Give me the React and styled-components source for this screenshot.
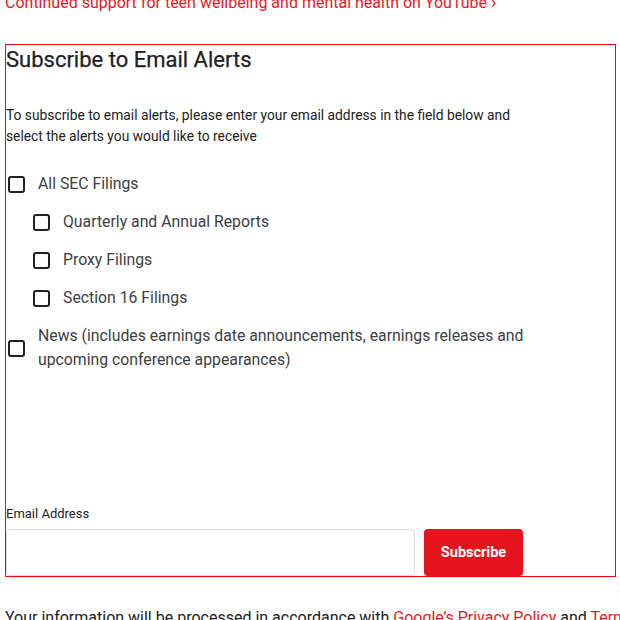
import React from 'react';
import styled, { createGlobalStyle } from 'styled-components';

const GlobalStyle = createGlobalStyle`
  html, body {
    margin: 0;
    padding: 0;
    background: #fff;
    overflow: hidden;
  }
  body {
    font-family: Roboto, "Open Sans", Arial, sans-serif;
    color: #202124;
  }
`;

const alerts = [
  { id: 'all', label: 'All SEC Filings', nested: false },
  { id: 'quarterly', label: 'Quarterly and Annual Reports', nested: true },
  { id: 'proxy', label: 'Proxy Filings', nested: true },
  { id: 'section16', label: 'Section 16 Filings', nested: true },
  {
    id: 'news',
    label:
      'News (includes earnings date announcements, earnings releases and upcoming conference appearances)',
    nested: false,
  },
];

const App = () => (
  <Page>
    <GlobalStyle />
    <TopLink href="#">
      Continued support for teen wellbeing and mental health on YouTube <Chevron>›</Chevron>
    </TopLink>

    <AlertsForm onSubmit={e => e.preventDefault()}>
      <Title>Subscribe to Email Alerts</Title>
      <Intro>
        To subscribe to email alerts, please enter your email address in the field below and
        <br />
        select the alerts you would like to receive
      </Intro>

      <OptionList>
        {alerts.map(item => (
          <Option key={item.id} $nested={item.nested}>
            <Box type="checkbox" id={item.id} />
            <OptionLabel htmlFor={item.id}>{item.label}</OptionLabel>
          </Option>
        ))}
      </OptionList>

      <EmailField>
        <FieldLabel htmlFor="email">Email Address</FieldLabel>
        <FieldRow>
          <EmailInput id="email" type="email" />
          <SubmitButton type="submit">Subscribe</SubmitButton>
        </FieldRow>
      </EmailField>
    </AlertsForm>

    <Notice>
      Your information will be processed in accordance with <Link href="#">Google’s Privacy Policy</Link> and{' '}
      <Link href="#">Terms of Service</Link>.
    </Notice>
  </Page>
);

export default App;

const Page = styled.div`
  padding: 0 5px;
  width: 700px;
`;

const TopLink = styled.a`
  display: block;
  margin-top: -10px;
  font-size: 16px;
  line-height: 24px;
  color: #e8171f;
  text-decoration: none;
`;

const Chevron = styled.span`
  font-size: 18px;
`;

const AlertsForm = styled.form`
  box-sizing: border-box;
  width: 611px;
  margin-top: 29px;
  padding-top: 1px;
  border: 1px solid #ff0000;
`;

const Title = styled.h2`
  margin: 0;
  font-size: 22px;
  line-height: 28px;
  font-weight: 400;
  color: #202124;
  -webkit-text-stroke: 0.25px #202124;
`;

const Intro = styled.p`
  margin: 31px 0 0;
  font-size: 13.8px;
  line-height: 21px;
`;

const OptionList = styled.div`
  margin-top: 18px;
  display: flex;
  flex-direction: column;
`;

const Option = styled.div`
  display: flex;
  align-items: center;
  gap: 13px;
  padding: 7px 0 7px ${p => (p.$nested ? '27px' : '2px')};
`;

const Box = styled.input`
  appearance: none;
  flex: none;
  box-sizing: border-box;
  width: 17px;
  height: 17px;
  margin: 0;
  border: 2px solid #202124;
  border-radius: 3px;
  background: #fff;
`;

const OptionLabel = styled.label`
  max-width: 500px;
  font-size: 15.8px;
  line-height: 24px;
  color: #3c4043;
`;

const EmailField = styled.div`
  margin-top: 126px;
`;

const FieldLabel = styled.label`
  display: block;
  font-size: 13px;
  line-height: 18px;
`;

const FieldRow = styled.div`
  display: flex;
  gap: 9px;
  margin-top: 6px;
`;

const EmailInput = styled.input`
  box-sizing: border-box;
  width: 409px;
  height: 47px;
  border: 1px solid #dadce0;
  border-radius: 4px;
  font-size: 15px;
`;

const SubmitButton = styled.button`
  width: 99px;
  height: 47px;
  border: none;
  border-radius: 4px;
  background: #e5131d;
  color: #fff;
  font-family: Roboto, Arial, sans-serif;
  font-size: 14.5px;
  font-weight: 700;
`;

const Notice = styled.p`
  margin: 29px 0 0;
  font-size: 16px;
  line-height: 24px;
  white-space: nowrap;
`;

const Link = styled.a`
  color: #e8171f;
  text-decoration: none;
`;
